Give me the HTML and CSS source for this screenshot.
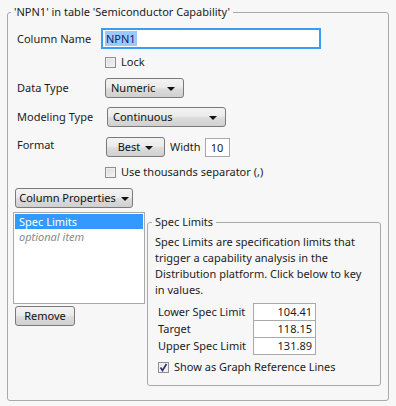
FILE: index.html
```html
<!DOCTYPE html>
<html lang="en">
<head>
  <meta charset="UTF-8">
  <title>Column Info</title>
  <link rel="stylesheet" href="styles.css">
</head>
<body>
  <div class="page">
    <fieldset class="group outer">
      <legend>'NPN1' in table 'Semiconductor Capability'</legend>

      <div class="row row-name">
        <span class="label">Column Name</span>
        <div class="textbox focus"><span class="sel">NPN1</span></div>
      </div>

      <div class="row row-lock">
        <span class="label"></span>
        <label class="check"><span class="box"></span>Lock</label>
      </div>

      <div class="row row-dtype">
        <span class="label">Data Type</span>
        <div class="combo combo-numeric">Numeric <span class="arrow"></span></div>
      </div>

      <div class="row row-mtype">
        <span class="label">Modeling Type</span>
        <div class="combo combo-model">Continuous <span class="arrow"></span></div>
      </div>

      <div class="row row-format">
        <span class="label top">Format</span>
        <div class="btn btn-best">Best <span class="arrow"></span></div>
        <span class="width-label">Width</span>
        <div class="numbox">10</div>
      </div>

      <div class="row row-sep">
        <span class="label"></span>
        <label class="check"><span class="box"></span>Use thousands separator (,)</label>
      </div>

      <div class="btn btn-props">Column Properties <span class="arrow"></span></div>

      <div class="props">
        <div class="props-left">
          <ul class="listbox">
            <li class="selected">Spec Limits</li>
            <li class="optional">optional item</li>
          </ul>
          <div class="btn btn-remove">Remove</div>
        </div>

        <fieldset class="group inner">
          <legend>Spec Limits</legend>
          <p class="desc">Spec Limits are specification limits that trigger a capability analysis in the Distribution platform. Click below to key in values.</p>
          <div class="limits">
            <div class="limit"><span>Lower Spec Limit</span><div class="valbox">104.41</div></div>
            <div class="limit"><span>Target</span><div class="valbox">118.15</div></div>
            <div class="limit"><span>Upper Spec Limit</span><div class="valbox">131.89</div></div>
          </div>
          <label class="check check-ref"><span class="box checked">
            <svg width="9" height="9" viewBox="0 0 9 9"><path d="M1.5 4.5 L3.5 7.5 L7.5 1" fill="none" stroke="#2b2d6e" stroke-width="1.6"/></svg>
          </span>Show as Graph Reference Lines</label>
        </fieldset>
      </div>
    </fieldset>
  </div>
</body>
</html>
```

FILE: styles.css
```css
html, body {
  margin: 0;
  background: #f7f7f7;
}

body {
  font-family: "Segoe UI", "Noto Sans", sans-serif;
  font-size: 11px;
  line-height: 16px;
  color: #1c1c1c;
  white-space: nowrap;
}

.page {
  padding: 4px 7px 0 7px;
  width: 382px;
}

.group {
  margin: 0;
  border: 1px solid #a9a9a9;
  border-radius: 3px;
}

.group legend {
  padding: 0 3px;
}

.outer {
  padding: 8px 7px 9px 5px;
  height: 378px;
}

.outer legend {
  margin-left: -2px;
}

.row {
  display: flex;
  align-items: center;
}

.label {
  width: 88px;
  padding-left: 4px;
  flex: none;
}

.label.top {
  align-self: flex-start;
  margin-top: 0;
}

.textbox {
  width: 212px;
  height: 17px;
  margin-left: -4px;
  background: #fff;
  border: 2px solid #3c9cf4;
  padding: 0 2px;
  line-height: 17px;
}

.sel {
  background: #99c9ff;
  color: #1a1a6a;
  padding: 0 1px;
}

.row-lock { margin-top: 5px; }
.row-dtype { margin-top: 8px; }
.row-mtype { margin-top: 9px; }
.row-format { margin-top: 10px; }
.row-sep { margin-top: 7px; }

.check {
  display: flex;
  align-items: center;
  gap: 5px;
}

.box {
  width: 11px;
  height: 11px;
  border: 1px solid #8f8f8f;
  background: linear-gradient(135deg, #dcdcdc, #f4f4f4);
  box-shadow: inset 0 0 0 1px #f0f0f0;
  box-sizing: border-box;
  display: flex;
  align-items: center;
  justify-content: center;
  flex: none;
}

.box.checked {
  background: linear-gradient(135deg, #e4e4e4, #fafafa);
}

.btn, .combo {
  height: 18px;
  border: 1px solid #7a7a7a;
  border-radius: 3px;
  background: linear-gradient(#f3f3f3 0%, #ebebeb 45%, #dcdcdc 55%, #d0d0d0 100%);
  display: flex;
  align-items: center;
  box-sizing: content-box;
  color: #111;
}

.btn {
  justify-content: center;
  gap: 5px;
}

.arrow {
  width: 0;
  height: 0;
  border-left: 4px solid transparent;
  border-right: 4px solid transparent;
  border-top: 4px solid #111;
  margin-top: 1px;
}

.combo {
  justify-content: space-between;
  padding: 0 8px 0 5px;
}

.combo-numeric { width: 64px; }
.combo-model { width: 104px; margin-left: 2px; }

.btn-best { width: 57px; margin-left: 1px; }

.width-label { margin-left: 5px; }

.numbox {
  width: 23px;
  height: 17px;
  margin-left: 4px;
  background: #fff;
  border: 1px solid #a9a9a9;
  text-align: center;
  line-height: 17px;
}

.btn-props {
  width: 116px;
  margin-top: 8px;
  margin-left: 2px;
}

.props {
  display: flex;
  gap: 2px;
  margin-top: 4px;
}

.props-left {
  width: 132px;
  flex: none;
}

.listbox {
  list-style: none;
  margin: 0;
  padding: 1px;
  height: 88px;
  background: #fff;
  border: 1px solid #a9a9a9;
}

.listbox li {
  padding-left: 4px;
  height: 15px;
  line-height: 15px;
}

.listbox .selected {
  background: #3399ff;
  color: #fff;
}

.listbox .optional {
  color: #8a8a8a;
  font-style: italic;
}

.btn-remove {
  width: 58px;
  margin-top: 2px;
  margin-left: 2px;
}

.inner {
  flex: 1;
  padding: 0 7px 0 7px;
  margin-top: 2px;
  height: 170px;
}

.inner legend {
  margin-left: -3px;
}

.desc {
  margin: 4px 0 0 0;
  white-space: normal;
}

.limits {
  margin-top: 5px;
  padding-left: 3px;
}

.limit {
  display: flex;
  align-items: center;
  height: 18px;
}

.limit + .limit {
  margin-top: -1px;
}

.limit span {
  width: 95px;
}

.valbox {
  width: 58px;
  height: 16px;
  border: 1px solid #a9a9a9;
  background: #fff;
  text-align: right;
  padding-right: 3px;
  line-height: 16px;
}

.check-ref {
  margin-top: 4px;
  padding-left: 3px;
}
```
